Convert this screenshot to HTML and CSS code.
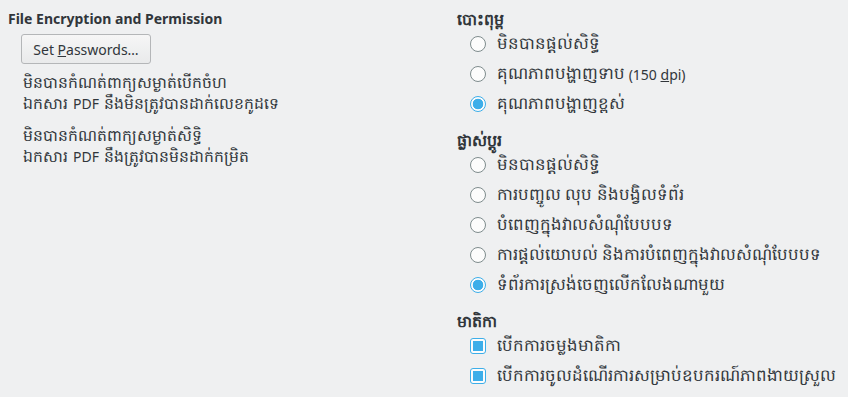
FILE: index.html
```html
<!DOCTYPE html>
<html lang="km">
<head>
    <meta charset="UTF-8">
    <title>PDF Security</title>
    <link rel="stylesheet" href="styles.css">
</head>
<body>
    <div class="dialog">
        <div class="col-left">
            <h3 class="group-title">File Encryption and Permission</h3>
            <button class="push-btn">Set <u>P</u>asswords…</button>
            <p class="note">មិនបានកំណត់ពាក្យសម្ងាត់បើកចំហ<br>ឯកសារ <span class="lat">PDF</span> នឹងមិនត្រូវបានដាក់លេខកូដទេ</p>
            <p class="note">មិនបានកំណត់ពាក្យសម្ងាត់សិទ្ធិ<br>ឯកសារ <span class="lat">PDF</span> នឹងត្រូវបានមិនដាក់កម្រិត</p>
        </div>

        <div class="col-right">
            <h3 class="group-title km">បោះពុម្ព</h3>
            <div class="opts">
                <label class="opt"><span class="radio"></span>មិនបានផ្ដល់សិទ្ធិ</label>
                <label class="opt"><span class="radio"></span>គុណភាពបង្ហាញទាប<span class="lat">&nbsp;(150 <u>d</u>pi)</span></label>
                <label class="opt"><span class="radio on"></span>គុណភាពបង្ហាញខ្ពស់</label>
            </div>

            <h3 class="group-title km">ផ្លាស់ប្ដូរ</h3>
            <div class="opts">
                <label class="opt"><span class="radio"></span>មិនបានផ្ដល់សិទ្ធិ</label>
                <label class="opt"><span class="radio"></span>ការបញ្ចូល លុប និងបង្វិលទំព័រ</label>
                <label class="opt"><span class="radio"></span>បំពេញក្នុងវាលសំណុំបែបបទ</label>
                <label class="opt"><span class="radio"></span>ការផ្ដល់យោបល់ និងការបំពេញក្នុងវាលសំណុំបែបបទ</label>
                <label class="opt"><span class="radio on"></span>ទំព័រការស្រង់ចេញលើកលែងណាមួយ</label>
            </div>

            <h3 class="group-title km">មាតិកា</h3>
            <div class="opts">
                <label class="opt"><span class="check on"></span>បើកការចម្លងមាតិកា</label>
                <label class="opt"><span class="check on"></span>បើកការចូលដំណើរការសម្រាប់ឧបករណ៍ភាពងាយស្រួល</label>
            </div>
        </div>
    </div>
</body>
</html>
```

FILE: styles.css
```css
* {
    margin: 0;
    padding: 0;
    box-sizing: border-box;
}

body {
    background-color: #eff0f1;
    font-family: "Noto Sans", sans-serif;
    font-size: 14px;
    color: #31363b;
}

.dialog {
    display: flex;
    padding: 9px 0 0 8px;
}

.col-left {
    width: 449px;
}

.col-right {
    flex: 1;
}

.group-title {
    font-size: 14px;
    font-weight: bold;
    line-height: 20px;
}

.group-title.km {
    font-size: 15.8px;
}

.lat {
    font-size: 14px;
}

.push-btn {
    display: block;
    margin: 5px 0 0 13px;
    width: 130px;
    height: 30px;
    font-family: "Noto Sans", sans-serif;
    font-size: 14px;
    color: #31363b;
    background: linear-gradient(#f6f6f6, #e9eaeb);
    border: 1px solid #b4b6b8;
    border-radius: 3px;
}

.note {
    margin: 8px 0 0 15px;
    font-size: 15.6px;
    line-height: 21px;
    word-spacing: 1px;
}

.note + .note {
    margin-top: 11px;
}

.opts {
    padding-left: 13px;
    margin-bottom: 11px;
}

.opt {
    display: flex;
    align-items: center;
    height: 30px;
    font-size: 16.6px;
    white-space: nowrap;
}

.radio {
    width: 16px;
    height: 16px;
    border: 1px solid #7f8c8d;
    border-radius: 50%;
    background: #fcfcfc;
    margin-right: 11px;
    flex-shrink: 0;
}

.radio.on {
    border-color: #3daee9;
    background: radial-gradient(circle, #3daee9 0 5px, #fcfcfc 5.6px);
}

.check {
    width: 16px;
    height: 16px;
    border: 1px solid #3daee9;
    border-radius: 3px;
    background: #fcfcfc;
    margin-right: 11px;
    flex-shrink: 0;
    position: relative;
}

.check.on::after {
    content: "";
    position: absolute;
    left: 2px;
    top: 2px;
    width: 10px;
    height: 10px;
    background: #3daee9;
}
```
